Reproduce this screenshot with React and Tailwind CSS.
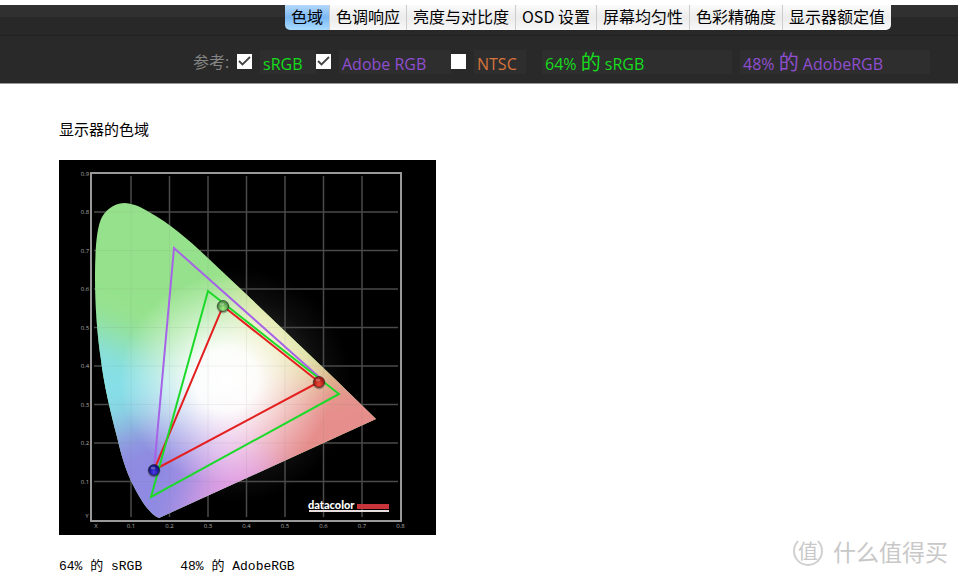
import React, { useState } from 'react';

const TABS = ['色域', '色调响应', '亮度与对比度', 'OSD 设置', '屏幕均匀性', '色彩精确度', '显示器额定值'];

// chart coordinates -> svg units
const px = (v) => 33.5 + v * 385;
const py = (v) => 360 - v * 385;

const LOCUS =
    'M100 358 C90 354 81 339 72 321 C64 303 61 289 58 277 C51 250 45 225 42 200 C38 175 36 145 36 118 C36 95 37 68 43 57 C49 47 58 43 66 43 C76 44 82 47 90 52 C112 64 131 81 150 99 L187 134 L233 178 L276 219 L317 259 Z';

const ReferenceOption = ({ id, label, checked, onChange, textClass, boxClass }) => (
    <div className="flex items-center gap-2">
        <span className="relative flex w-[15px] h-[15px]">
            <input
                id={id}
                type="checkbox"
                checked={checked}
                onChange={onChange}
                className="appearance-none w-[15px] h-[15px] bg-white"
            />
            {checked && (
                <svg viewBox="0 0 15 15" className="absolute inset-0 pointer-events-none" fill="none" stroke="#444" strokeWidth="1.800">
                    <path d="M2 7 L5.500 10.500 L13 3" />
                </svg>
            )}
        </span>
        <label htmlFor={id} className={`h-6 pl-[3px] bg-[#2e2e2e] whitespace-nowrap leading-7 ${boxClass} ${textClass}`}>{label}</label>
    </div>
);

const Marker = ({ x, y, fill }) => (
    <g>
        <circle cx={x} cy={y + 1} r="6.500" fill="#000" opacity="0.25" />
        <circle cx={x} cy={y} r="5.500" fill={`url(#${fill})`} stroke="#222" strokeOpacity="0.6" />
        <ellipse cx={x - 1} cy={y - 2} rx="2.500" ry="1.500" fill="#fff" opacity="0.3" />
    </g>
);

const GamutChart = () => {
    const xTicks = [0.1, 0.2, 0.3, 0.4, 0.5, 0.6, 0.7];
    const yTicks = [0.1, 0.2, 0.3, 0.4, 0.5, 0.6, 0.7, 0.8];

    return (
        <svg viewBox="0 0 377 375" role="img" aria-label="显示器的色域" className="block w-[377px] bg-black">
            <defs>
                <clipPath id="locus"><path d={LOCUS} /></clipPath>
                <filter id="soft" x="-30%" y="-30%" width="160%" height="160%">
                    <feGaussianBlur stdDeviation="19" />
                </filter>
                <radialGradient id="white">
                    <stop offset="0" stopColor="#fff" />
                    <stop offset="0.300" stopColor="#fff" stopOpacity="0.95" />
                    <stop offset="0.650" stopColor="#fff" stopOpacity="0.450" />
                    <stop offset="1" stopColor="#fff" stopOpacity="0" />
                </radialGradient>
                <radialGradient id="halo">
                    <stop offset="0.500" stopColor="#fff" stopOpacity="0.14" />
                    <stop offset="0.750" stopColor="#fff" stopOpacity="0.05" />
                    <stop offset="1" stopColor="#fff" stopOpacity="0" />
                </radialGradient>
                <radialGradient id="ballGreen" cy="0.7"><stop offset="0" stopColor="#a4ee84" /><stop offset="1" stopColor="#4e9544" /></radialGradient>
                <radialGradient id="ballRed" cy="0.7"><stop offset="0" stopColor="#f04a38" /><stop offset="1" stopColor="#a51a14" /></radialGradient>
                <radialGradient id="ballBlue" cy="0.7"><stop offset="0" stopColor="#4a3cf0" /><stop offset="1" stopColor="#141088" /></radialGradient>
            </defs>

            <circle cx="175" cy="225" r="118" fill="url(#halo)" />

            {/* grid */}
            <g stroke="#4a4a4a" strokeWidth="1.500">
                {xTicks.map((t) => <line key={t} x1={px(t)} x2={px(t)} y1="16" y2="357" />)}
                {yTicks.map((t) => <line key={t} x1="35" x2="339" y1={py(t)} y2={py(t)} />)}
            </g>

            {/* spectrum */}
            <g clipPath="url(#locus)">
                <rect width="377" height="375" fill="#96e28c" />
                <g filter="url(#soft)">
                    <path d="M165 225 L-30 145 L-30 300 Z" fill="#86dfe8" />
                    <path d="M165 225 L-30 305 L-10 420 L150 400 Z" fill="#8f8ae2" />
                    <path d="M165 225 L115 420 L230 400 L225 295 Z" fill="#e2a0e2" />
                    <path d="M165 225 L225 330 L370 320 L370 220 L265 195 Z" fill="#e68e8c" />
                    <path d="M165 225 L285 215 L245 150 L190 90 Z" fill="#dfe090" />
                </g>
                <ellipse cx="167" cy="220" rx="106" ry="104" fill="url(#white)" />
                <g stroke="#777" strokeWidth="1" opacity="0.1">
                    {xTicks.map((t) => <line key={t} x1={px(t)} x2={px(t)} y1="16" y2="357" />)}
                    {yTicks.map((t) => <line key={t} x1="35" x2="339" y1={py(t)} y2={py(t)} />)}
                </g>
            </g>

            <rect x="32" y="13" width="310" height="348" fill="none" stroke="#999" strokeWidth="2" />

            {/* axis labels */}
            <g fill="#aaa" fontSize="6" fontFamily="Open Sans, sans-serif" textAnchor="middle">
                {[...yTicks, 0.9].map((t) => <text key={t} x="26" y={py(t) + 2}>{t}</text>)}
                {[...xTicks, 0.8].map((t) => <text key={t} x={px(t)} y="368">{t}</text>)}
                <text x="28" y="358">Y</text>
                <text x="37" y="368">X</text>
            </g>

            {/* gamut triangles */}
            <g fill="none" strokeWidth="2">
                <path d="M95 310 L115 88 L260 217" stroke="#a663e8" />
                <path d="M164 146 L260 222 L95 310 Z" stroke="#e3201f" />
                <path d="M149 131 L280 234 L92 337 Z" stroke="#1cd92a" />
            </g>
            <Marker x={164} y={146} fill="ballGreen" />
            <Marker x={260} y={222} fill="ballRed" />
            <Marker x={95} y={310} fill="ballBlue" />

            <text x="249" y="349" fill="#fff" fontSize="11" fontWeight="900" fontFamily="Lato, sans-serif">datacolor</text>
            <rect x="298" y="344" width="32" height="5" fill="#c8343a" />
            <rect x="250" y="350" width="80" height="2" fill="#e8dede" />
        </svg>
    );
};

const App = () => {
    const [activeTab, setActiveTab] = useState('色域');
    const [refs, setRefs] = useState({ srgb: true, adobe: true, ntsc: false });

    const toggle = (key) => setRefs({ ...refs, [key]: !refs[key] });

    return (
        <div className="relative bg-white pt-[5px] text-black font-['Open_Sans','Noto_Sans_CJK_SC',sans-serif]">
            {/* Toolbar */}
            <header className="bg-[#292929] border-b border-[#999]">
                <div className="h-[31px] border-b border-[#202020] bg-linear-to-b from-[#303030] from-40% to-[#282828] to-40% pl-[218px] flex justify-center items-start">
                    <nav className="flex h-[25px] rounded-b-[5px] overflow-hidden">
                        {TABS.map((tab) => (
                            <button
                                key={tab}
                                onClick={() => setActiveTab(tab)}
                                className={`px-[6px] pb-1 h-[25px] text-base leading-5 whitespace-nowrap border-r border-[#ccc] last:border-r-0 font-['Noto_Sans_CJK_SC',sans-serif] ${
                                    activeTab === tab
                                        ? 'bg-linear-to-b from-[#b4d8fa] via-[#7bb8f5] to-[#a9dcff]'
                                        : 'bg-linear-to-b from-[#fbfbfb] via-[#ececec] to-[#f8f8f8]'
                                }`}
                            >
                                {tab}
                            </button>
                        ))}
                    </nav>
                </div>

                <div className="h-[47px] pl-[193px] pt-1 flex items-center text-base">
                    <span className="w-11 text-[#858585] whitespace-nowrap">参考:</span>
                    <div className="flex items-center">
                        <ReferenceOption id="srgb" label="sRGB" checked={refs.srgb} onChange={() => toggle('srgb')} textClass="text-[#16dc1c]" boxClass="w-14" />
                        <ReferenceOption id="adobe" label="Adobe RGB" checked={refs.adobe} onChange={() => toggle('adobe')} textClass="text-[#8e4fd0]" boxClass="w-28" />
                        <ReferenceOption id="ntsc" label="NTSC" checked={refs.ntsc} onChange={() => toggle('ntsc')} textClass="text-[#d8733c]" boxClass="w-[52px]" />
                    </div>
                    <p className="ml-4 w-[190px] h-6 leading-7 pl-[3px] bg-[#2e2e2e] text-[#16dc1c] whitespace-nowrap">64% <span className="text-xl leading-6">的</span> sRGB</p>
                    <p className="ml-2 w-[190px] h-6 leading-7 pl-[3px] bg-[#2e2e2e] text-[#8e4fd0] whitespace-nowrap">48% <span className="text-xl leading-6">的</span> AdobeRGB</p>
                </div>
            </header>

            {/* Report */}
            <main className="px-[59px] pt-[33px]">
                <h1 className="text-[15px] leading-6 mb-[19px] font-['Noto_Sans_CJK_SC',sans-serif]">显示器的色域</h1>
                <GamutChart />
                <div className="flex gap-[38px] pt-5 text-[13px] leading-6 whitespace-nowrap font-['Liberation_Mono','Noto_Sans_CJK_SC',monospace]">
                    <p>64% 的 sRGB</p>
                    <p>48% 的 AdobeRGB</p>
                </div>
            </main>

            {/* Watermark */}
            <div className="absolute right-[10px] bottom-3 flex items-center gap-[10px] text-[#c8c8c8] font-['Noto_Sans_CJK_SC',sans-serif]">
                <span className="w-[30px] h-[30px] rounded-full border-2 border-[#d0d0d0] border-t-transparent flex items-center justify-center text-xl leading-6">值</span>
                <span className="text-[23px] leading-8">什么值得买</span>
            </div>
        </div>
    );
};

export default App;
